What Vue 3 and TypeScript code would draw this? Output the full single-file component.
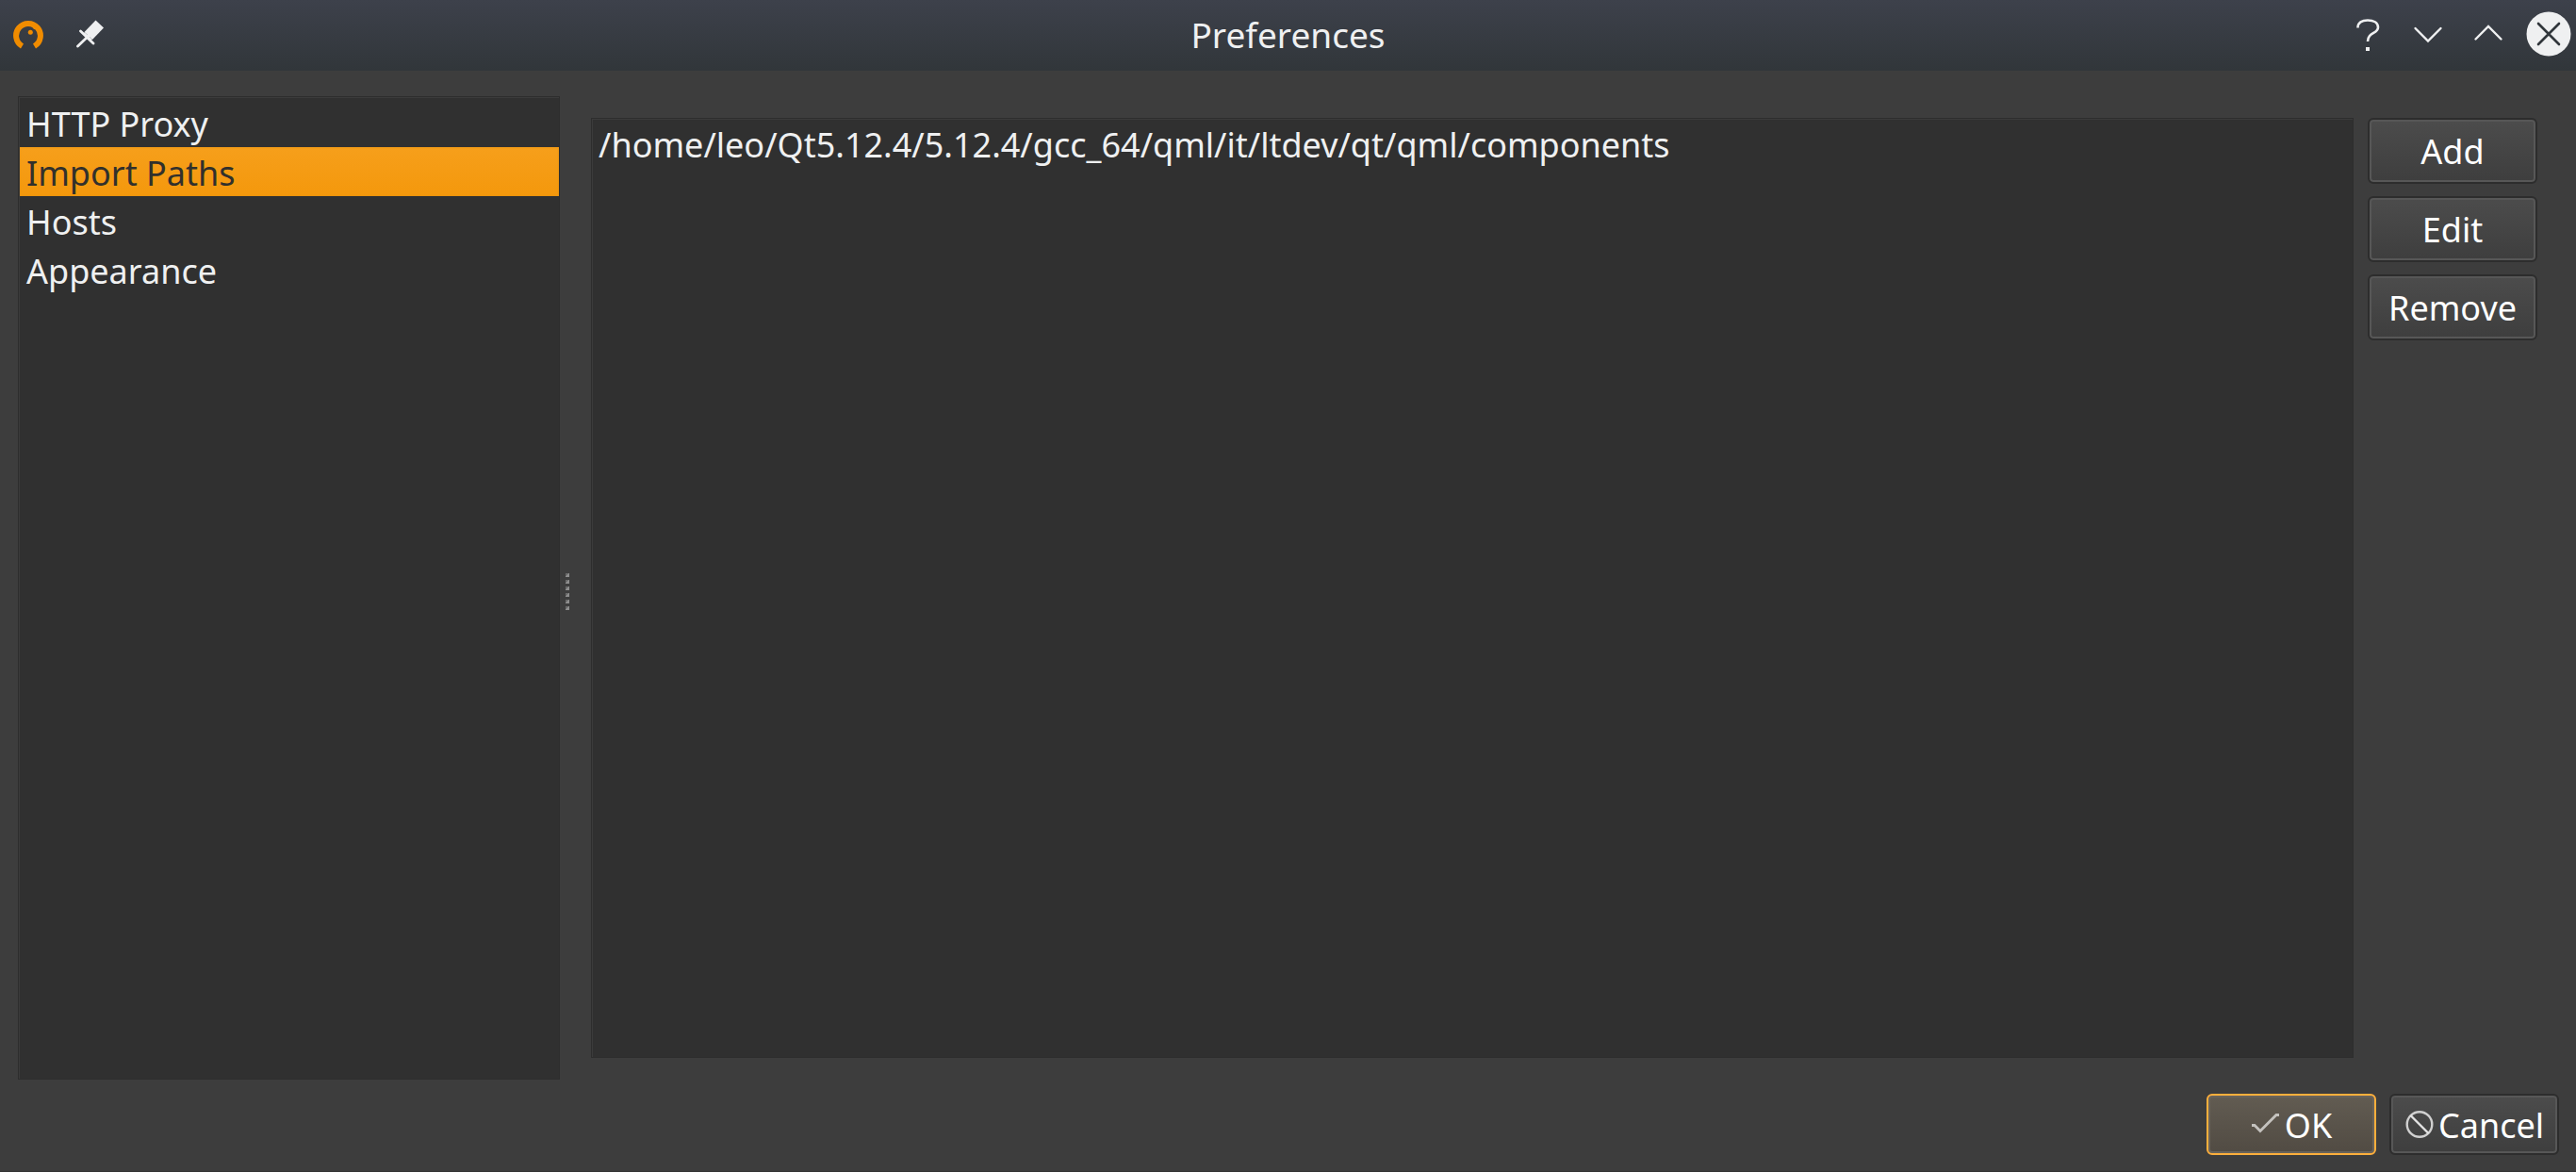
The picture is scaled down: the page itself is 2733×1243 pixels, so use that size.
<script setup lang="ts">
import { ref } from 'vue'

const categories: string[] = ['HTTP Proxy', 'Import Paths', 'Hosts', 'Appearance']
const current = ref('Import Paths')
const paths = ref<string[]>(['/home/leo/Qt5.12.4/5.12.4/gcc_64/qml/it/ltdev/qt/qml/components'])
const actions: string[] = ['Add', 'Edit', 'Remove']
</script>

<template>
  <div class="window">
    <header class="titlebar">
      <div class="side left">
        <svg class="app-icon" viewBox="0 0 32 32" aria-hidden="true">
          <path d="M9.500 29A12.900 12.900 0 1 1 22.500 29" fill="none" stroke="#f08c00" stroke-width="6" />
          <path d="M18 6 28 9.500V12L22 11Z" fill="#f08c00" />
          <circle cx="18.300" cy="14.200" r="2.500" fill="#f08c00" />
        </svg>
        <button class="tool pin" type="button" aria-label="Keep above others">
          <svg width="30" height="30" viewBox="0 0 30 30" aria-hidden="true">
            <path d="M20.500 0.500 29 8.500 17 21 8.500 13Z" fill="#eff0f1" />
            <path d="M4.500 12 18 25M13 17 1.500 28" fill="none" stroke="#eff0f1" stroke-width="2.800" stroke-linecap="round" />
            <path d="M8.500 13 17 21 14 22 8 16Z" fill="#eff0f1" />
          </svg>
        </button>
      </div>
      <h1>Preferences</h1>
      <div class="side right">
        <button class="tool" type="button" aria-label="Help">
          <svg width="48" height="48" viewBox="0 0 48 48" aria-hidden="true">
            <path d="M13.500 17.500C13.500 12 18 9.500 24 9.500S35 12 35 17C35 24 24 22 24 32" fill="none" stroke="#eff0f1" stroke-width="2.600" />
            <rect x="22" y="38" width="4" height="4" fill="#eff0f1" />
          </svg>
        </button>
        <button class="tool" type="button" aria-label="Minimize">
          <svg width="48" height="48" viewBox="0 0 48 48" aria-hidden="true">
            <path d="M10.500 18 24 31.500 37.500 18" fill="none" stroke="#eff0f1" stroke-width="2.400" stroke-linecap="round" />
          </svg>
        </button>
        <button class="tool" type="button" aria-label="Maximize">
          <svg width="48" height="48" viewBox="0 0 48 48" aria-hidden="true">
            <path d="M10.500 29.500 24 16 37.500 29.500" fill="none" stroke="#eff0f1" stroke-width="2.400" stroke-linecap="round" />
          </svg>
        </button>
        <button class="tool" type="button" aria-label="Close">
          <svg width="48" height="48" viewBox="0 0 48 48" aria-hidden="true">
            <circle cx="24" cy="24" r="23.500" fill="#eff0f1" />
            <path d="M13 13 35 35M35 13 13 35" fill="none" stroke="#31363b" stroke-width="2.600" stroke-linecap="round" />
          </svg>
        </button>
      </div>
    </header>

    <main class="body">
      <nav class="panel categories" aria-label="Categories">
        <button
          v-for="name in categories"
          :key="name"
          type="button"
          class="row"
          :class="{ selected: name === current }"
          @click="current = name"
        >{{ name }}</button>
      </nav>
      <div class="splitter" role="separator" aria-orientation="vertical">
        <i v-for="n in 6" :key="n"></i>
      </div>
      <section class="page">
        <ul class="panel paths">
          <li v-for="p in paths" :key="p" class="row">{{ p }}</li>
        </ul>
        <div class="actions">
          <button v-for="a in actions" :key="a" type="button" class="push">{{ a }}</button>
        </div>
      </section>
    </main>

    <footer class="footer">
      <button type="button" class="push default">
        <svg width="32" height="32" viewBox="0 0 32 32" aria-hidden="true">
          <path d="M1 15.500H4L10 21.500 27 4.500H30" fill="none" stroke="#c4c2be" stroke-width="2.800" />
        </svg>
        <span>OK</span>
      </button>
      <button type="button" class="push">
        <svg width="32" height="32" viewBox="0 0 32 32" aria-hidden="true">
          <circle cx="16" cy="14.500" r="13.300" fill="none" stroke="#d0d0d0" stroke-width="2.400" />
          <path d="M6.500 5 25.500 24" fill="none" stroke="#e4e4e4" stroke-width="2.400" />
        </svg>
        <span>Cancel</span>
      </button>
    </footer>
  </div>
</template>

<style>
body {
  margin: 0;
  background: #3d3d3d;
}
</style>

<style scoped>
.window {
  box-sizing: border-box;
  min-height: 100vh;
  display: flex;
  flex-direction: column;
  background: #3d3d3d;
  border-bottom: 1px solid #333333;
  color: #eff0f1;
  font: 36px/54px "Noto Sans", sans-serif;
}

button {
  font: inherit;
  color: inherit;
  margin: 0;
  padding: 0;
  border: 0;
  background: none;
}

svg {
  display: block;
  flex: none;
}

.titlebar {
  height: 75px;
  flex: none;
  display: flex;
  align-items: center;
  box-sizing: border-box;
  padding: 0 5px 3px;
  background: linear-gradient(#3d414b, #31363a);
}

.titlebar h1 {
  margin: 0;
  padding-top: 2px;
  font-size: 37px;
  font-weight: 400;
}

.side {
  flex: 1 1 0;
  display: flex;
  align-items: center;
}

.side.left {
  gap: 35px;
}

.side.right {
  justify-content: flex-end;
  gap: 16px;
}

.app-icon {
  width: 32px;
  height: 32px;
  margin-left: 9px;
}

.body {
  flex: 1;
  display: flex;
  padding: 27px 18px 15px 19px;
}

.panel {
  box-sizing: border-box;
  margin: 0;
  padding: 1px 0 0 1px;
  list-style: none;
  border: 1px solid #2d2d2d;
  background: #303030;
  box-shadow: inset 1px 1px #3b3b3b;
}

.categories {
  width: 575px;
  flex: none;
  display: flex;
  flex-direction: column;
}

.row {
  display: block;
  height: 52px;
  padding: 0 6px;
  text-align: left;
  white-space: nowrap;
}

.categories .row {
  display: flex;
  align-items: flex-start;
  padding: 0 7px;
  line-height: 56px;
}

.row.selected {
  color: #31302c;
  background: linear-gradient(#f69f1b, #f4980c);
  box-shadow: inset 0 0 2px #d98a12;
}

.splitter {
  box-sizing: border-box;
  width: 10px;
  padding-top: 7px;
  flex: none;
  display: flex;
  flex-direction: column;
  align-items: flex-end;
  justify-content: center;
  gap: 3px;
}

.splitter i {
  width: 4px;
  height: 4px;
  background: linear-gradient(135deg, #6a6a6a 40%, #8e8e8e 40%);
}

.page {
  flex: 1;
  display: flex;
  gap: 15px;
  padding: 23px;
}

.paths {
  flex: 1;
}

.actions {
  display: flex;
  flex-direction: column;
  gap: 13px;
}

.push {
  box-sizing: border-box;
  width: 180px;
  height: 70px;
  display: flex;
  align-items: center;
  justify-content: center;
  gap: 4px;
  padding-top: 2px;
  color: #ffffff;
  border: 2px solid #2d2d2d;
  border-radius: 6px;
  background: linear-gradient(#4c4c4c, #3e3e3e);
  box-shadow: inset 0 0 0 2px #575757;
}

.footer {
  flex: none;
  display: flex;
  justify-content: flex-end;
  gap: 14px;
  padding: 0 18px 17px;
}

.footer .push {
  height: 65px;
}

.push.default {
  border-color: #ffaf3c;
  background: linear-gradient(#625c52, #514b43);
  box-shadow: inset 0 0 0 2px #69645b;
}
</style>
